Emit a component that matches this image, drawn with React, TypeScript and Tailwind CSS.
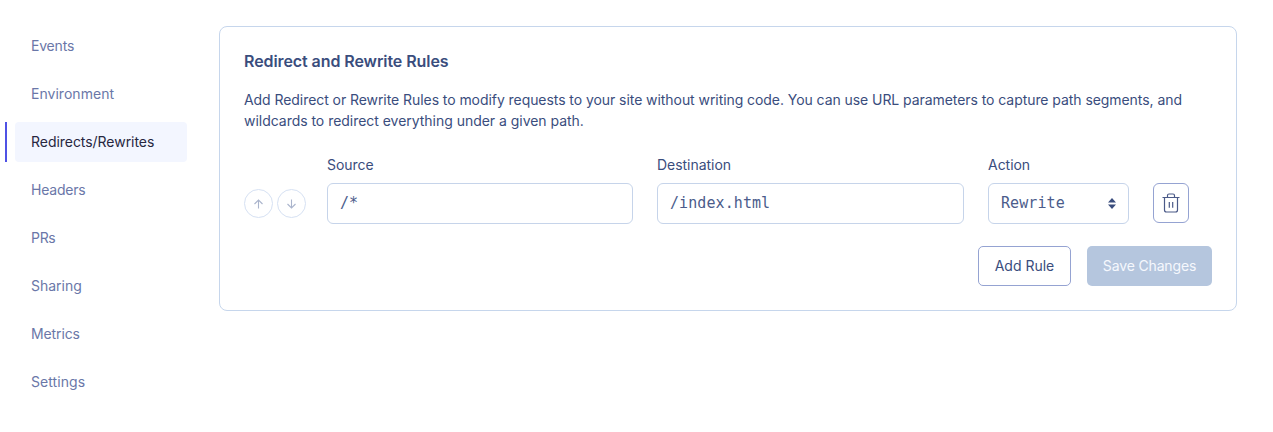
import { ReactNode } from "react";
import { clsx } from "clsx";

const navItems = [
  { label: "Events", tracking: "tracking-[-0.2px]" },
  { label: "Environment", tracking: "tracking-[0.03px]" },
  { label: "Redirects/Rewrites", tracking: "tracking-[-0.04px]", active: true },
  { label: "Headers", tracking: "tracking-[-0.2px]" },
  { label: "PRs", tracking: "tracking-[-0.3px]" },
  { label: "Sharing", tracking: "tracking-[0px]" },
  { label: "Metrics", tracking: "tracking-[-0.12px]" },
  { label: "Settings", tracking: "tracking-[0.08px]" },
];

function Sidebar() {
  return (
    <nav className="flex w-[187px] shrink-0 flex-col gap-2 pt-[26px] pl-[5px]">
      {navItems.map((item) => (
        <div key={item.label} className="flex h-10 gap-2">
          <span className={clsx("w-0.5 shrink-0", item.active && "bg-[#4f52e5]")} />
          <a
            className={clsx(
              "flex flex-1 items-center rounded pl-4 text-sm",
              item.tracking,
              item.active ? "bg-[#f3f6ff] text-[#27273f]" : "text-[#6a77a8]",
            )}
          >
            {item.label}
          </a>
        </div>
      ))}
    </nav>
  );
}

function MoveButton({ up }: { up?: boolean }) {
  return (
    <button className="flex size-[29px] items-center justify-center rounded-full border border-[#d6e1f3] text-[#aab4cc]">
      <svg width="11" height="11" viewBox="0 0 11 11" fill="none" stroke="currentColor" strokeWidth="1.1">
        {up ? <path d="M5.5 10.5V2M1.5 6L5.5 2L9.5 6" /> : <path d="M5.5 1.5V10M1.5 6L5.5 10L9.5 6" />}
      </svg>
    </button>
  );
}

function Field({ label, width, children }: { label: string; width: string; children: ReactNode }) {
  return (
    <div className={clsx("flex shrink-0 flex-col gap-2", width)}>
      <span className="text-sm leading-5 tracking-[-0.03px]">{label}</span>
      <div className="flex h-[41px] items-center justify-between rounded-md border border-[#c6d4ea] pr-3 pl-3 font-['DejaVu_Sans_Mono',monospace] text-[15px] tracking-[0.08px] text-[#4b5c8b]">
        {children}
      </div>
    </div>
  );
}

export default function App() {
  return (
    <div className="flex h-[432px] w-[1273px] overflow-hidden bg-white font-['Inter',sans-serif] text-[#3a4d7d]">
      <Sidebar />
      <main className="mt-[26px] ml-8 h-[285px] w-[1018px] rounded-lg border border-[#c6d6ec] px-6 pt-6">
        <h1 className="h-5 text-base leading-5 font-semibold tracking-[-0.08px]">Redirect and Rewrite Rules</h1>
        <p className="mt-[18px] text-sm leading-[21px] whitespace-nowrap">
          <span className="tracking-[-0.064px]">
            Add Redirect or Rewrite Rules to modify requests to your site without writing code. You can use URL parameters to capture path segments, and
          </span>
          <br />
          <span className="tracking-[-0.03px]">wildcards to redirect everything under a given path.</span>
        </p>
        <div className="mt-[24px] flex gap-6">
          <div className="mr-[-3px] flex gap-1 pt-[34px]">
            <MoveButton up />
            <MoveButton />
          </div>
          <Field label="Source" width="w-[306px]">/*</Field>
          <Field label="Destination" width="w-[307px]">/index.html</Field>
          <Field label="Action" width="w-[141px]">
            Rewrite
            <svg width="8" height="11" viewBox="0 0 8 11" fill="#3a4d7d">
              <path d="M0 4.5L4 0L8 4.5ZM0 6.5L4 11L8 6.5Z" />
            </svg>
          </Field>
          <button className="mt-7 flex h-10 w-9 items-center justify-center rounded-md border border-[#95a3d2]">
            <svg width="18" height="20" viewBox="0 0 18 20" fill="none" stroke="#4b5a88" strokeWidth="1.2">
              <path d="M.5 4.5H17.5M2.5 4.5V17Q2.5 19 4.5 19H13.5Q15.5 19 15.5 17V4.5M5.5 4.5V2.5Q5.5 1 7 1H11Q12.5 1 12.5 2.5V4.5M7.3 9V14.7M10.7 9V14.7" />
            </svg>
          </button>
        </div>
        <div className="mt-[22px] flex justify-end gap-4 text-sm">
          <button className="h-10 w-[93px] rounded-[5px] border border-[#95a3d2]">Add Rule</button>
          <button className="h-10 w-[125px] rounded-[5px] bg-[#b5c6de] tracking-[-0.15px] text-[#f5f8fd]">Save Changes</button>
        </div>
      </main>
    </div>
  );
}
